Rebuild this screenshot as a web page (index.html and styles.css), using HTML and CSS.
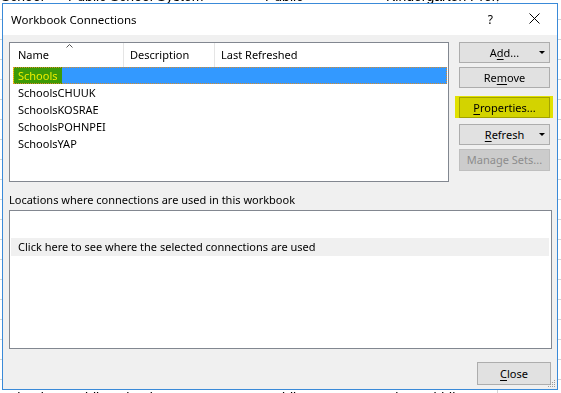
FILE: index.html
```html
<!DOCTYPE html>
<html>
<head>
<meta charset="utf-8">
<link rel="stylesheet" href="styles.css">
</head>
<body>
<div class="sheet">
  <div class="sheet-row sheet-top">
    <span class="sc sc1">School</span><span class="sc sc2">Public School System</span><span class="sc sc3">Public</span><span class="sc sc4">Kindergarten Prek</span>
  </div>
  <div class="sheet-row sheet-bottom">
    <span class="sc sc1">Schools</span><span class="sc sc2">Public School System</span><span class="sc sc3">Public</span><span class="sc sc4">Elem Middle</span>
  </div>
</div>

<div class="dialog">
  <div class="titlebar">
    <span class="title">Workbook Connections</span>
    <span class="help">?</span>
    <svg class="close-x" width="11" height="11" viewBox="0 0 11 11"><path d="M0.5 0.5 L10.5 10.5 M10.5 0.5 L0.5 10.5" stroke="#000" stroke-width="1" fill="none"/></svg>
  </div>
  <div class="content">
    <div class="upper">
      <div class="listbox">
        <div class="list-head">
          <div class="col c1">Name<svg class="sort" width="7" height="4" viewBox="0 0 7 4"><path d="M0.5 3.5 L3.5 0.5 L6.5 3.5" stroke="#555" fill="none"/></svg></div>
          <div class="col c2">Description</div>
          <div class="col c3">Last Refreshed</div>
        </div>
        <div class="row selected"><span class="hl">Schools</span></div>
        <div class="row">SchoolsCHUUK</div>
        <div class="row">SchoolsKOSRAE</div>
        <div class="row">SchoolsPOHNPEI</div>
        <div class="row">SchoolsYAP</div>
      </div>
      <div class="buttons">
        <div class="btn btn-add">A<u>d</u>d...<span class="caret"></span></div>
        <div class="btn btn-remove">Re<u>m</u>ove</div>
        <div class="btn btn-props"><u>P</u>roperties...</div>
        <div class="btn btn-refresh"><u>R</u>efresh<span class="caret"></span></div>
        <div class="btn btn-manage disabled">Manage Sets...</div>
      </div>
    </div>
    <div class="loc-label">Locations where connections are used in this workbook</div>
    <div class="locbox">
      <div class="loc-row">Click here to see where the selected connections are used</div>
    </div>
    <div class="footer">
      <div class="btn btn-close"><u>C</u>lose</div>
    </div>
  </div>
  <svg class="grip" width="8" height="8" viewBox="0 0 8 8">
    <rect x="6" y="0" width="1" height="1" fill="#9a9a9a"/>
    <rect x="4" y="2" width="1" height="1" fill="#9a9a9a"/>
    <rect x="6" y="2" width="1" height="1" fill="#9a9a9a"/>
    <rect x="2" y="4" width="1" height="1" fill="#9a9a9a"/>
    <rect x="4" y="4" width="1" height="1" fill="#9a9a9a"/>
    <rect x="6" y="4" width="1" height="1" fill="#9a9a9a"/>
    <rect x="0" y="6" width="1" height="1" fill="#9a9a9a"/>
    <rect x="2" y="6" width="1" height="1" fill="#9a9a9a"/>
    <rect x="4" y="6" width="1" height="1" fill="#9a9a9a"/>
    <rect x="6" y="6" width="1" height="1" fill="#9a9a9a"/>
  </svg>
</div>
</body>
</html>
```

FILE: styles.css
```css
* { box-sizing: border-box; }

html, body {
  margin: 0;
  padding: 0;
}

body {
  width: 561px;
  height: 393px;
  overflow: hidden;
  position: relative;
  background-color: #ffffff;
  background-image:
    linear-gradient(to right, transparent 497px, #d4d4d4 497px, #d4d4d4 498px, transparent 498px),
    repeating-linear-gradient(to bottom, transparent 0, transparent 19px, #d4d4d4 19px, #d4d4d4 20px);
  font-family: "Noto Sans", "Open Sans", sans-serif;
  font-size: 11px;
  color: #000;
}

/* spreadsheet behind the dialog */
.sheet {
  position: absolute;
  inset: 0;
}
.sheet-row {
  position: absolute;
  left: 0;
  width: 561px;
  height: 16px;
  font-family: "Liberation Sans", sans-serif;
  font-size: 14px;
  line-height: 16px;
  white-space: nowrap;
}
.sheet-top { top: -12px; }
.sheet-bottom { top: 390px; }
.sc { position: absolute; }
.sc1 { left: 1px; }
.sc2 { left: 68px; }
.sc3 { left: 265px; }
.sc4 { left: 386px; }

/* dialog window */
.dialog {
  position: absolute;
  left: 2px;
  top: 3px;
  width: 556px;
  height: 387px;
  border: 1px solid #3a8ad8;
  background: #f0f0f0;
  display: flex;
  flex-direction: column;
}

.titlebar {
  height: 31px;
  flex: none;
  background: #ffffff;
  display: flex;
  align-items: center;
  padding-left: 8px;
}
.title {
  font-size: 11.5px;
  color: #000;
  flex: 1;
  margin-top: -1px;
}
.help {
  font-size: 12px;
  margin-right: 36px;
  margin-top: -1px;
}
.close-x {
  margin-right: 17px;
  margin-top: -2px;
}

.content {
  flex: 1;
  display: flex;
  flex-direction: column;
  padding: 7px 5px 0 6px;
}

.upper {
  display: flex;
  height: 140px;
}

.listbox {
  width: 440px;
  height: 140px;
  border: 1px solid #828790;
  background: #ffffff;
  flex: none;
}

.list-head {
  display: flex;
  height: 24px;
}
.col {
  height: 24px;
  line-height: 24px;
  position: relative;
  white-space: nowrap;
}
.c1 { width: 114px; padding-left: 8px; border-right: 1px solid #e5e5e5; }
.c2 { width: 91px; padding-left: 6px; border-right: 1px solid #e5e5e5; }
.c3 { flex: 1; padding-left: 6px; }
.sort {
  position: absolute;
  left: 56px;
  top: 1px;
}

.row {
  height: 17px;
  line-height: 17px;
  padding-left: 8px;
  white-space: nowrap;
}
.row.selected {
  margin-left: 3px;
  margin-right: 1px;
  padding-left: 0;
  background: #3399ff;
  outline: 1px dotted #d98a2a;
  outline-offset: -1px;
}
.hl {
  display: inline-block;
  height: 17px;
  padding: 0 4px;
  background: #3d9a06;
  color: #eded00;
  border-left: 1px solid #e6e600;
}

.buttons {
  margin-left: 10px;
  width: 91px;
  display: flex;
  flex-direction: column;
}

.btn {
  height: 21px;
  line-height: 19px;
  border: 1px solid #adadad;
  background: #e1e1e1;
  text-align: center;
  position: relative;
  white-space: nowrap;
}
.btn u { text-decoration: underline; text-underline-offset: 2px; }

.btn-remove { margin-top: 4px; }
.btn-props { margin-top: 9px; }
.btn-refresh { margin-top: 6px; }
.btn-manage { margin-top: 4px; height: 22px; }

.btn-props::after {
  content: "";
  position: absolute;
  left: -5px;
  right: -4px;
  top: -2px;
  bottom: -1px;
  background: #efef00;
  mix-blend-mode: multiply;
}

.caret {
  position: absolute;
  right: 4px;
  top: 8px;
  width: 0;
  height: 0;
  border-left: 3px solid transparent;
  border-right: 3px solid transparent;
  border-top: 3px solid #000;
}

.disabled {
  background: #cccccc;
  border-color: #bfbfbf;
  color: #8c8c8c;
}

.loc-label {
  margin-top: 10px;
  height: 16px;
  line-height: 16px;
}

.locbox {
  margin-top: 2px;
  width: 543px;
  height: 139px;
  border: 1px solid #828790;
  background: #ffffff;
  padding: 27px 2px 0 1px;
}
.loc-row {
  height: 18px;
  line-height: 18px;
  background: #f0f0f0;
  padding-left: 7px;
  white-space: nowrap;
}

.footer {
  display: flex;
  justify-content: flex-end;
  margin-top: 13px;
  width: 542px;
}
.btn-close {
  width: 74px;
  height: 23px;
  line-height: 21px;
}

.grip {
  position: absolute;
  right: 1px;
  bottom: 1px;
}
```
